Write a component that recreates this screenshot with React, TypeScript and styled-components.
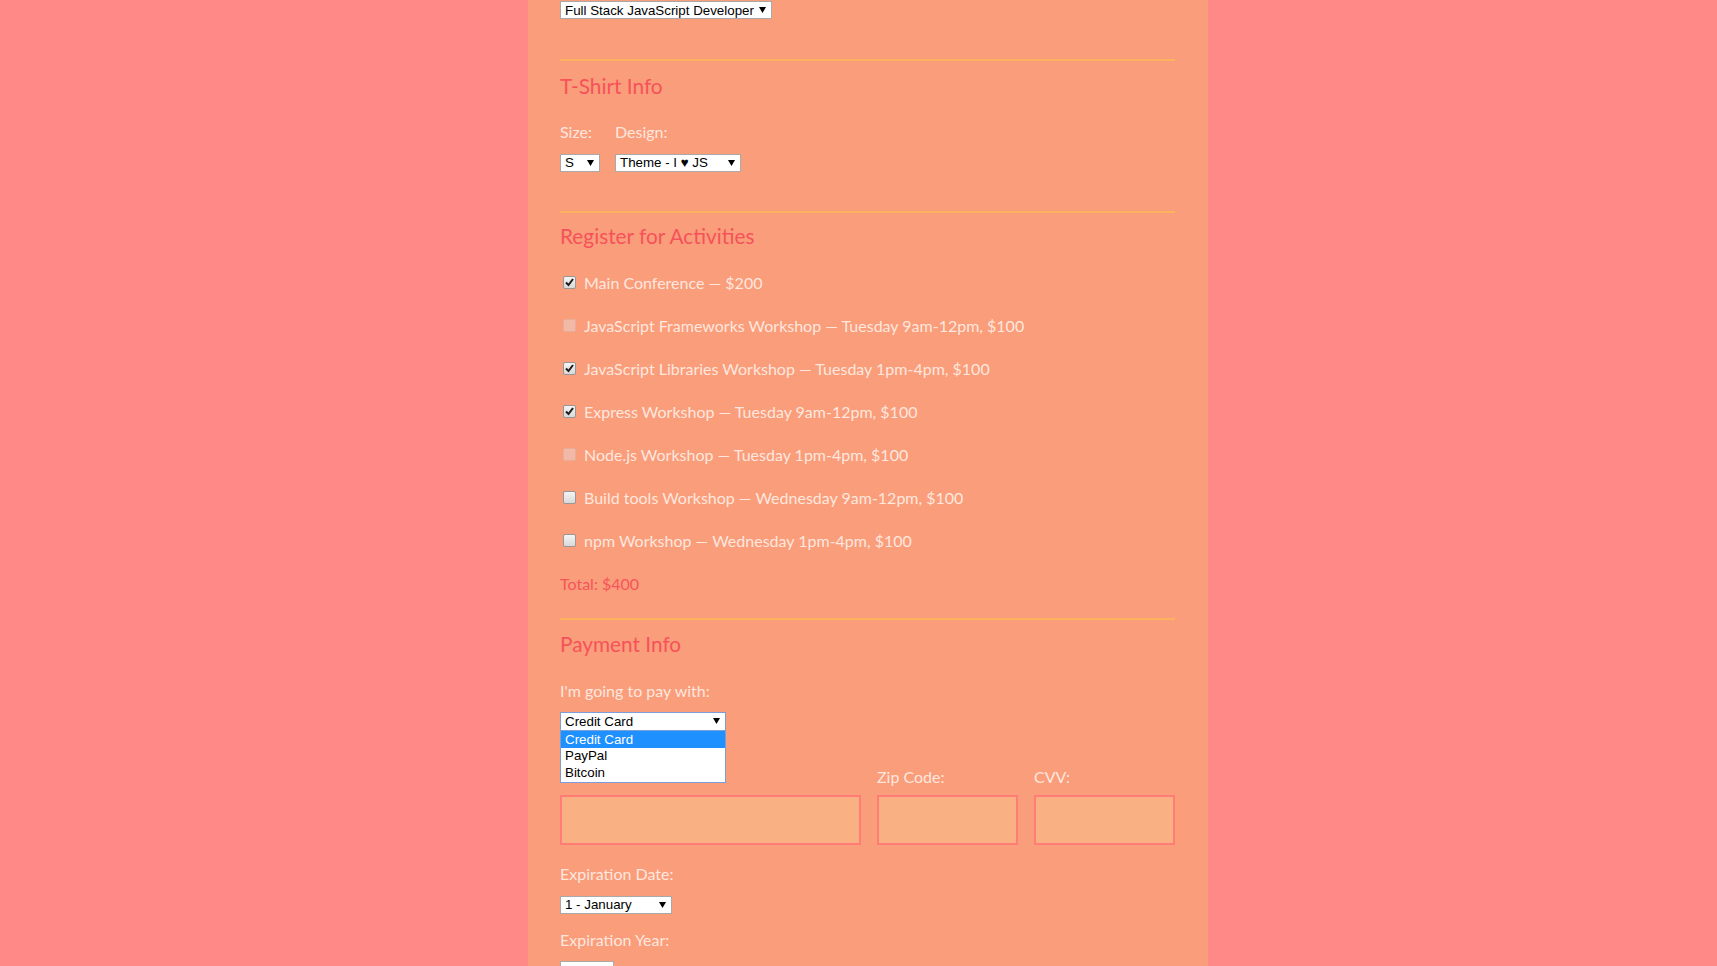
import styled, { createGlobalStyle } from 'styled-components';

const GlobalStyle = createGlobalStyle`
  html, body {
    margin: 0;
    padding: 0;
    overflow: hidden;
    background: #ff8986;
  }
  body {
    font-family: Lato, 'Open Sans', sans-serif;
  }
`;

const Page = styled.div`
  display: flex;
  min-height: 100vh;
  padding-left: 528px;
`;

const Form = styled.form`
  width: 680px;
  min-height: 100vh;
  box-sizing: border-box;
  padding: 0 33px 0 32px;
  background: #fa9d7a;
  display: flex;
  flex-direction: column;
`;

const Divider = styled.hr<{ $mt: number }>`
  border: none;
  height: 2px;
  margin: ${(p) => p.$mt}px 0 0;
  background: #ffb25e;
`;

const Heading = styled.h2<{ $mt: number }>`
  margin: ${(p) => p.$mt}px 0 0;
  font-size: 20.8px;
  line-height: 26px;
  font-weight: 400;
  color: #f6525a;
`;

const Label = styled.label<{ $mt?: number }>`
  display: block;
  margin-top: ${(p) => p.$mt ?? 0}px;
  font-size: 16px;
  line-height: 20px;
  color: #ffe7df;
`;

const SelectWrap = styled.div<{ $mt?: number }>`
  position: relative;
  margin-top: ${(p) => p.$mt ?? 0}px;
  align-self: flex-start;
`;

const SelectBox = styled.div<{ $w: number; $focused?: boolean }>`
  box-sizing: border-box;
  width: ${(p) => p.$w}px;
  height: ${(p) => (p.$focused ? 19 : 18)}px;
  padding: 0 5px 0 4px;
  display: flex;
  align-items: center;
  justify-content: space-between;
  background: #fff;
  border: 1px solid ${(p) => (p.$focused ? '#7b9ed8' : '#a9a9a9')};
  font-family: 'Liberation Sans', Arial, sans-serif;
  font-size: 13.33px;
  color: #000;
  white-space: nowrap;
`;

const DropList = styled.ul`
  position: absolute;
  top: 100%;
  left: 0;
  z-index: 2;
  box-sizing: border-box;
  width: 100%;
  margin: 0;
  padding: 0;
  list-style: none;
  background: #fff;
  border: 1px solid #7b9ed8;
  border-top: none;
  font-family: 'Liberation Sans', Arial, sans-serif;
  font-size: 13.33px;
`;

const DropOption = styled.li<{ $active?: boolean }>`
  height: 17px;
  line-height: ${(p) => (p.$active ? 17 : 15)}px;
  padding-left: 4px;
  background: ${(p) => (p.$active ? '#1e90ff' : '#fff')};
  color: ${(p) => (p.$active ? '#fff' : '#000')};
`;

const ShirtRow = styled.div`
  display: flex;
  gap: 15px;
  margin-top: 23px;
`;

const Column = styled.div`
  display: flex;
  flex-direction: column;
  gap: 12px;
`;

const ActivityList = styled.div`
  display: flex;
  flex-direction: column;
  gap: 23px;
  margin-top: 23.5px;
`;

const ActivityRow = styled.label`
  display: flex;
  align-items: center;
  gap: 8px;
  height: 20px;
  font-size: 16px;
  color: #ffe7df;
`;

const Box = styled.span<{ $disabled?: boolean }>`
  box-sizing: border-box;
  width: 13px;
  height: 13px;
  margin-left: 3px;
  display: flex;
  align-items: center;
  justify-content: center;
  border-radius: 2px;
  border: 1px solid ${(p) => (p.$disabled ? '#e8ad98' : '#979797')};
  background: ${(p) =>
    p.$disabled ? '#f2baa6' : 'linear-gradient(#f4f4f4, #d9d9d9)'};
`;

const Total = styled.div`
  height: 20px;
  line-height: 20px;
  font-size: 16px;
  color: #f6555b;
`;

const CardGrid = styled.div`
  display: grid;
  grid-template-columns: 301px 141px 1fr;
  column-gap: 16px;
  row-gap: 8px;
  margin-top: 36px;
`;

const TextInput = styled.input`
  box-sizing: border-box;
  width: 100%;
  height: 50px;
  margin: 0;
  background: #f9b184;
  border: 2px solid #ff7d76;
  outline: none;
`;

const Arrow = () => (
  <svg width="7" height="6" viewBox="0 0 7 6">
    <polygon points="0,0 7,0 3.5,6" fill="#000" />
  </svg>
);

const Select = ({ w, value, focused }: { w: number; value: string; focused?: boolean }) => (
  <SelectBox $w={w} $focused={focused}>
    <span>{value}</span>
    <Arrow />
  </SelectBox>
);

const Check = ({ checked, disabled }: { checked?: boolean; disabled?: boolean }) => (
  <Box $disabled={disabled}>
    {checked && (
      <svg width="9" height="9" viewBox="0 0 9 9">
        <path d="M1 4.5 L3.5 7 L8 1" stroke="#1c1c1c" strokeWidth="2" fill="none" />
      </svg>
    )}
  </Box>
);

const activities = [
  { text: 'Main Conference — $200', checked: true },
  { text: 'JavaScript Frameworks Workshop — Tuesday 9am-12pm, $100', disabled: true },
  { text: 'JavaScript Libraries Workshop — Tuesday 1pm-4pm, $100', checked: true },
  { text: 'Express Workshop — Tuesday 9am-12pm, $100', checked: true },
  { text: 'Node.js Workshop — Tuesday 1pm-4pm, $100', disabled: true },
  { text: 'Build tools Workshop — Wednesday 9am-12pm, $100' },
  { text: 'npm Workshop — Wednesday 1pm-4pm, $100' },
];

export default function App() {
  return (
    <>
      <GlobalStyle />
      <Page>
        <Form>
          <SelectWrap $mt={1}>
            <Select w={212} value="Full Stack JavaScript Developer" />
          </SelectWrap>

          <Divider $mt={40} />
          <Heading $mt={11.5}>T-Shirt Info</Heading>
          <ShirtRow>
            <Column>
              <Label>Size:</Label>
              <Select w={40} value="S" />
            </Column>
            <Column>
              <Label>Design:</Label>
              <Select w={126} value="Theme - I ♥ JS" />
            </Column>
          </ShirtRow>

          <Divider $mt={39} />
          <Heading $mt={10.5}>Register for Activities</Heading>
          <ActivityList>
            {activities.map((a) => (
              <ActivityRow key={a.text}>
                <Check checked={a.checked} disabled={a.disabled} />
                {a.text}
              </ActivityRow>
            ))}
            <Total>Total: $400</Total>
          </ActivityList>

          <Divider $mt={24.5} />
          <Heading $mt={10.5}>Payment Info</Heading>
          <Label $mt={24}>I'm going to pay with:</Label>
          <SelectWrap $mt={11}>
            <Select w={166} value="Credit Card" focused />
            <DropList>
              <DropOption $active>Credit Card</DropOption>
              <DropOption>PayPal</DropOption>
              <DropOption>Bitcoin</DropOption>
            </DropList>
          </SelectWrap>

          <CardGrid>
            <Label>Card Number:</Label>
            <Label>Zip Code:</Label>
            <Label>CVV:</Label>
            <TextInput />
            <TextInput />
            <TextInput />
          </CardGrid>

          <Label $mt={19.5}>Expiration Date:</Label>
          <SelectWrap $mt={11.5}>
            <Select w={112} value="1 - January" />
          </SelectWrap>
          <Label $mt={16.5}>Expiration Year:</Label>
          <SelectWrap $mt={11}>
            <Select w={54} value="2016" />
          </SelectWrap>
        </Form>
      </Page>
    </>
  );
}
